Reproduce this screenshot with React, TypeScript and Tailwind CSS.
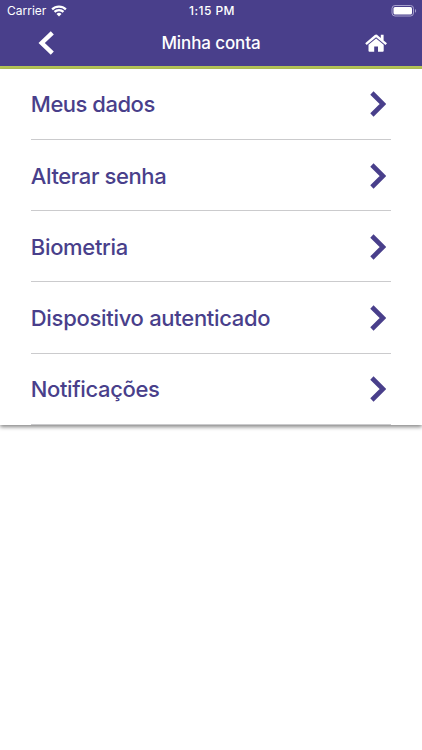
const items = [
  { label: 'Meus dados', tracking: 'tracking-[-0.48px]' },
  { label: 'Alterar senha', tracking: 'tracking-[-0.4px]' },
  { label: 'Biometria', tracking: 'tracking-[-0.32px]' },
  { label: 'Dispositivo autenticado', tracking: 'tracking-[-0.3px]' },
  { label: 'Notificações', tracking: 'tracking-[-0.37px]' },
];

function Chevron({ className, d, strokeWidth }: { className: string; d: string; strokeWidth: number }) {
  return (
    <svg className={className} viewBox="0 0 16 26" fill="none" stroke="currentColor" strokeWidth={strokeWidth}>
      <path d={d} />
    </svg>
  );
}

function StatusBar() {
  return (
    <div className="grid h-[22px] grid-cols-3 items-center pr-[5px] pl-[7px]">
      <div className="flex items-center gap-[5px]">
        <span className="text-[12px] leading-none">Carrier</span>
        <svg className="h-[12px] w-[16px]" viewBox="0 0 16 12" fill="none" stroke="currentColor" strokeWidth="2.2">
          <path d="M1.1 4.4A9.9 9.9 0 0 1 14.9 4.4" />
          <path d="M3.5 6.9A6.4 6.4 0 0 1 12.5 6.9" />
          <path d="M8 11.4L5.5 8.9A3.6 3.6 0 0 1 10.5 8.9Z" fill="currentColor" stroke="none" />
        </svg>
      </div>
      <span className="text-center text-[12px] leading-none font-medium tracking-[0.45px]">1:15 PM</span>
      <svg className="h-[12px] w-[26px] justify-self-end" viewBox="0 0 26 12" fill="none">
        <rect x="1" y="0.5" width="21.5" height="10.5" rx="3" stroke="#a6a0cd" />
        <rect x="2.5" y="2" width="18.5" height="7.5" rx="1.5" fill="#fff" />
        <path d="M24 4v3.8c1.5-.6 1.5-3.2 0-3.8Z" fill="#a6a0cd" />
      </svg>
    </div>
  );
}

export default function App() {
  return (
    <div className="h-[750px] w-full overflow-hidden bg-white font-['Inter','Liberation_Sans',sans-serif]">
      <header className="h-[68.5px] border-b-[3px] border-[#b5c557] bg-[#493f8b] text-white">
        <StatusBar />
        <div className="grid h-[42px] grid-cols-[76px_1fr_76px] items-center">
          <button aria-label="Voltar" className="ml-[38px] w-4">
            <Chevron className="h-[26px] w-4" d="M14.3 2.9L3.7 13L14.3 23.1" strokeWidth={4.4} />
          </button>
          <h1 className="text-center text-[17px] leading-none font-medium tracking-[-0.1px]">Minha conta</h1>
          <button aria-label="Início" className="ml-[18.5px] w-[23px]">
            <svg className="h-[18px] w-[23px]" viewBox="0 0 23 18" fill="currentColor">
              <path d="M11.1 0L15.8 4V.8H18.6V6.4L22 9.3L20.5 11.1L11.1 3.2L1.7 11.1L.2 9.3L9.8 1Q11.1 0 12.4 1Z" />
              <path d="M11.1 4.5L18.7 10.8V16.8Q18.7 17.8 17.7 17.8H13V12.6H9.2V17.8H4.5Q3.5 17.8 3.5 16.8V10.8Z" />
            </svg>
          </button>
        </div>
      </header>
      <main className="bg-white px-[30.8px] shadow-[0_2px_4px_rgba(0,0,0,0.48)]">
        <ul>
          {items.map(({ label, tracking }) => (
            <li key={label} className="flex h-[71.3px] items-center justify-between border-b border-[#cbcbcd] pt-[1.2px] pr-[5px] text-[#493f8b]">
              <span className={`text-[22px] leading-7 font-medium ${tracking}`}>{label}</span>
              <Chevron className="h-[26px] w-4" d="M1.9 2L13 13L1.9 24" strokeWidth={4.6} />
            </li>
          ))}
        </ul>
      </main>
    </div>
  );
}
